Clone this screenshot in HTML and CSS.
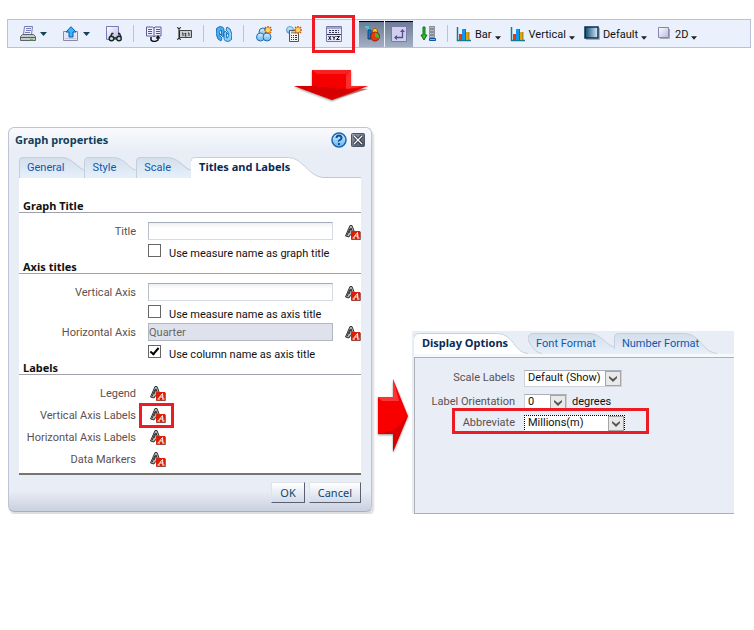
FILE: index.html
```html
<!DOCTYPE html>
<html lang="en">
<head>
<meta charset="utf-8">
<title>Graph properties</title>
<link rel="stylesheet" href="styles.css">
</head>
<body>
<svg class="defs" aria-hidden="true">
  <defs>
    <linearGradient id="tabfill" x1="0" y1="0" x2="0" y2="1"><stop offset="0" stop-color="#d3dfec"/><stop offset="1" stop-color="#e7f0fa"/></linearGradient>
    <linearGradient id="blue" x1="0" y1="0" x2="1" y2="0"><stop offset="0" stop-color="#0b4770"/><stop offset="1" stop-color="#d9efff"/></linearGradient>
    <linearGradient id="lilac" x1="0" y1="0" x2="1" y2="1"><stop offset="0" stop-color="#fff"/><stop offset="1" stop-color="#b9b9df"/></linearGradient>
    <linearGradient id="sky" x1="0" y1="0" x2="0" y2="1"><stop offset="0" stop-color="#d8f1ff"/><stop offset="1" stop-color="#66b4ee"/></linearGradient>
    <linearGradient id="box" x1="0" y1="0" x2="1" y2="1"><stop offset="0" stop-color="#98a0ae"/><stop offset="1" stop-color="#465060"/></linearGradient>
    <filter id="soft" x="-20%" y="-20%" width="140%" height="150%"><feDropShadow dx="0" dy="1" stdDeviation="1" flood-opacity=".45"/></filter>
    <symbol id="caret" viewBox="0 0 7 4"><path d="M0 0h7L3.500 4z"/></symbol>
    <symbol id="chev" viewBox="0 0 8 6"><path d="M0 0v2l4 4 4-4V0L4 3z"/></symbol>
    <symbol id="fontfmt" viewBox="0 0 16 16">
      <path d="M.500 12L5 1.500h2L11 12l-2 1-1-3-3 1-1 2z" fill="#b5b5b5" stroke="#333" stroke-width="1"/>
      <path d="M4 9l2-5 1.500 4M2 11.500l3-7" fill="none" stroke="#333"/>
      <rect x="6" y="7" width="9.500" height="9" rx="1" fill="#dc1e05"/>
      <path d="M7 15.500h8.500V8" fill="none" stroke="#7c5a55" opacity=".7"/>
      <path d="M8.500 13.500l4-5 .500 5M10 12h3M7.500 14h2.500M12 14h2.500" fill="none" stroke="#fff" stroke-width="1"/>
    </symbol>
    <symbol id="bars" viewBox="0 0 16 16">
      <path d="M1.500 1v13.500H15" fill="none" stroke="#16798c" stroke-width="1.500"/>
      <path d="M3 8h3v6H3z" fill="#e23d08"/><path d="M6 3h4v11H6z" fill="#0b98f8"/><path d="M10 6h3v8h-3z" fill="#e4a700"/><path d="M9.500 3v11M13 6v8" stroke="#31526a" opacity=".6"/>
    </symbol>
    <symbol id="star" viewBox="0 0 8 8"><path d="M4 0v8M0 4h8M1 1l6 6M7 1L1 7" stroke="#d05a00" stroke-width="1.500"/><circle cx="4" cy="4" r="2.300" fill="#ffd75c"/></symbol>
  </defs>
</svg>

<header class="toolbar" role="toolbar" aria-label="Graph view">
  <div class="group">
    <button class="tool menu" aria-label="Print">
      <svg class="icon" viewBox="0 0 16 16"><path d="M4.500.500h8l-1 8h-8z" fill="#eef0ff" stroke="#777ab8"/><path d="M6 2.500h5M6 4.500h5M5 6.500h5" stroke="#7779be"/><path d="M2.500 8.500h11l2 2v4H.500v-4z" fill="#c6cacd" stroke="#5c626a"/><path d="M1 11.500h14" stroke="#555b64"/><path d="M10 13.500h3" stroke="#41d629" stroke-width="1.500"/></svg>
      <svg class="caret"><use href="#caret"/></svg>
    </button>
    <button class="tool menu" aria-label="Export">
      <svg class="icon" viewBox="0 0 16 16"><path d="M4 5.500H.500v9h14v-9H11" fill="#e5e5f3" stroke="#8989a9"/><path d="M2 12.500h11" stroke="#c4c4d6"/><path d="M8 .700L13 6h-3v5H6V6H3z" fill="#3fb2ff" stroke="#075fab"/></svg>
      <svg class="caret"><use href="#caret"/></svg>
    </button>
    <button class="tool" aria-label="Preview">
      <svg class="icon" viewBox="0 0 16 16"><path d="M.500.500h12v13H.500z" fill="url(#lilac)" stroke="#777ab8"/><path d="M4.500 11L6 7.500h1.500M15 11l-1.500-3.500H12M8 12h3" fill="none" stroke="#222" stroke-width="1.500"/><circle cx="5.500" cy="12.500" r="2.300" fill="#a9e8e9" stroke="#222" stroke-width="1.400"/><circle cx="13" cy="12.500" r="2.300" fill="#a9e8e9" stroke="#222" stroke-width="1.400"/></svg>
    </button>
  </div>
  <div class="group">
    <button class="tool" aria-label="Duplicate view">
      <svg class="icon" viewBox="0 0 16 16"><path d="M.500 1h6l1.500 1 1-1h6v9H9l-1 1-1-1H.500z" fill="#f0efff" stroke="#5c5b9d"/><path d="M8 2v8M2 3.500h4M2 5.500h4M2 7.500h4M10 3.500h4M10 5.500h4M10 7.500h4" stroke="#5655a3"/><path d="M5 11v3q3 3 7 0v-3" fill="none" stroke="#111" stroke-width="1.500"/><path d="M9.500 12.500L12 9l2.500 3.500z" fill="#111"/></svg>
    </button>
    <button class="tool" aria-label="Rename view">
      <svg class="icon" viewBox="0 0 16 16"><path d="M3.500 4.500h12v7h-12z" fill="#c9ccd0" stroke="#444"/><path d="M6 7h1v3M8.500 7.500h1.500l-1 2.500h1.500M12 7h1v3" fill="none" stroke="#333"/><path d="M1 1.500l2 1 2-1M3 2v11M1 13.500l2-1 2 1" fill="none" stroke="#111"/></svg>
    </button>
  </div>
  <div class="group">
    <button class="tool" aria-label="Refresh">
      <svg class="icon" viewBox="0 0 16 16"><path d="M.500 2.500Q3-.500 6.500 1 8 2 8 4v4l1-1-2 4-3-3 1.500.500V5Q5.500 3.500 4.500 4 2.500 6 4 10l2 2-1 3-3-2Q-1 8 .500 2.500z" fill="#49aef0" stroke="#1269ad" stroke-width=".900"/><path d="M15.500 13.500Q13 16.500 9.500 15 8 14 8 12V8L7 9l2-4 3 3-1.500-.500V11q0 1.500 1 1 2-2 .500-6l-2-2 1-3 3 2q3 5 1.500 10.500z" fill="#8bd0f8" stroke="#1269ad" stroke-width=".900"/></svg>
    </button>
  </div>
  <div class="group">
    <button class="tool" aria-label="New group">
      <svg class="icon" viewBox="0 0 16 16"><g fill="url(#sky)" stroke="#246eb2"><circle cx="7" cy="6" r="4"/><circle cx="4.500" cy="11" r="4"/><circle cx="11" cy="11" r="4"/></g><svg x="8" y="0" width="8" height="8"><use href="#star"/></svg></svg>
    </button>
    <button class="tool" aria-label="New calculated item">
      <svg class="icon" viewBox="0 0 16 16"><circle cx="4" cy="4" r="3.500" fill="url(#sky)" stroke="#5d9acb"/><path d="M3.500 4.500h9v11h-9z" fill="#f5f5f5" stroke="#555"/><path d="M5 6.500h6" stroke="#999" stroke-width="2"/><path d="M5 9.500h1m1 0h1m1 0h2M5 11.500h1m1 0h1m1 0h2M5 13.500h1m1 0h1m1 0h2" stroke="#333"/><svg x="8" y="0" width="8" height="8"><use href="#star"/></svg></svg>
    </button>
    <button class="tool marked" aria-label="Edit graph properties">
      <svg class="icon" viewBox="0 0 16 16"><path d="M.500.500h15v15H.500z" fill="#e7e8fa" stroke="#7779aa"/><path d="M1 2h14" stroke="#a5a7d0" stroke-width="2"/><path d="M3 4.500h2m1 0h2m1 0h2m1 0h1M3 6.500h2m1 0h2m1 0h2m1 0h1M1 8.500h14" stroke="#33344d"/><path d="M2.500 10l2.500 4m0-4l-2.500 4M6.500 10L8 12l1.500-2M8 12v2M10.500 10.500h3l-3 3h3" fill="none" stroke="#15152a"/></svg>
    </button>
    <button class="tool pressed" aria-label="Show graph" aria-pressed="true">
      <svg class="icon" viewBox="0 0 16 16"><path d="M1 1h3v12h7" fill="none" stroke="#39cae5" stroke-width="2"/><path d="M4 4h3v9H4z" fill="#1676d2" stroke="#06407d"/><path d="M8 8q0-5 3-6 3 1 3 6z" fill="#ffc72c" stroke="#874b00" stroke-width=".800"/><circle cx="11" cy="10.500" r="4.500" fill="#e8380c" stroke="#731600" stroke-width=".800"/><path d="M11 10.500V6.500q5 1 4 6z" fill="#45b72d"/></svg>
    </button>
    <button class="tool pressed" aria-label="Swap axes" aria-pressed="true">
      <svg class="icon" viewBox="0 0 16 16"><path d="M.500.500h15v15H.500z" fill="#d0d0ec" stroke="#7a7aab"/><path d="M4 11.500h7.500V5" fill="none" stroke="#505092" stroke-width="1.300"/><path d="M9 6l2.500-3L14 6zM6 9v5l-3-2.500z" fill="#505092"/></svg>
    </button>
    <button class="tool sort" aria-label="Sort">
      <svg class="icon" viewBox="0 0 16 16"><path d="M3 1h2v8h2l-3 5-3-5h2z" fill="#30c128" stroke="#087215"/><g fill="#b9bcc2" stroke="#74777e" stroke-width=".800"><path d="M9.500.500h5v2h-5zM9.500 3.500h5v2h-5zM9.500 6.500h5v2h-5zM9.500 9.500h5v2h-5z"/></g><path d="M9.500 12.500h6v2h-6z" fill="#77bef5" stroke="#0c55a5"/></svg>
    </button>
  </div>
  <div class="group types">
    <button class="tool type"><svg class="icon"><use href="#bars"/></svg><span>Bar</span><svg class="caret low"><use href="#caret"/></svg></button>
    <button class="tool type"><svg class="icon"><use href="#bars"/></svg><span>Vertical</span><svg class="caret low"><use href="#caret"/></svg></button>
    <button class="tool type"><svg class="icon" viewBox="0 0 16 16"><path d="M1 1h13v11H1z" fill="url(#blue)" stroke="#092b4b" stroke-width="1.500"/><path d="M2 13.500h13.500V2" fill="none" stroke="#a4adba"/></svg><span>Default</span><svg class="caret low"><use href="#caret"/></svg></button>
    <button class="tool type"><svg class="icon" viewBox="0 0 16 16"><path d="M2.500 1.500h10v10h-10z" fill="url(#lilac)" stroke="#8585b3"/><path d="M4 12.500h9.500V3" fill="none" stroke="#aaa"/></svg><span>2D</span><svg class="caret low"><use href="#caret"/></svg></button>
  </div>
</header>

<svg class="arrow-down" viewBox="0 0 80 38" aria-hidden="true"><path d="M20 4h39v16h17L40 34 2 20h18z" fill="#f40000" filter="url(#soft)"/><path d="M54 9l5-5v16h17l-22 3z" fill="#ff5b5b" opacity=".5"/><path d="M20 4h39l-5 4H25z" fill="#ff5b5b" opacity=".35"/><path d="M2 20h18l34 3h22L40 34z" fill="#ba0000" opacity=".5"/></svg>

<main class="stage">
  <section class="dialog" aria-labelledby="dialog-title">
    <div class="titlebar">
      <h1 id="dialog-title">Graph properties</h1>
      <button class="corner" aria-label="Help"><svg class="icon" viewBox="0 0 16 16"><circle cx="8" cy="8" r="7" fill="url(#sky)" stroke="#1768b1" stroke-width="1.500"/><path d="M5.500 6q0-2.500 2.500-2.500T10.500 6Q10.500 7 9 8T8 9.500M8 11v2" fill="none" stroke="#0b519c" stroke-width="2"/></svg></button>
      <button class="corner" aria-label="Close"><svg class="icon" viewBox="0 0 16 16"><rect x="1.500" y="1.500" width="13" height="13" rx="1" fill="url(#box)" stroke="#4c5665"/><path d="M4 4l8 8M12 4l-8 8" stroke="#1f2733" stroke-width="3"/><path d="M4 4l8 8M12 4l-8 8" stroke="#fff" stroke-width="1.300"/></svg></button>
    </div>
    <div class="tabs" role="tablist">
      <button class="tab" role="tab"><svg class="shape" viewBox="0 0 65 21" preserveAspectRatio="none"><path d="M.500 21V4Q.500.500 5 .500H42C54 .500 58 12 65 13V21z" fill="url(#tabfill)"/><path d="M.500 21V4Q.500.500 5 .500H42C54 .500 58 12 65 13" fill="none" stroke="#c3cfdb"/></svg><span>General</span></button>
      <button class="tab" role="tab"><svg class="shape" viewBox="0 0 52 21" preserveAspectRatio="none"><path d="M.500 21V4Q.500.500 5 .500H29C41 .500 45 12 52 13V21z" fill="url(#tabfill)"/><path d="M.500 21V4Q.500.500 5 .500H29C41 .500 45 12 52 13" fill="none" stroke="#c3cfdb"/></svg><span>Style</span></button>
      <button class="tab" role="tab"><svg class="shape" viewBox="0 0 53 21" preserveAspectRatio="none"><path d="M.500 21V4Q.500.500 5 .500H30C42 .500 46 12 53 13V21z" fill="url(#tabfill)"/><path d="M.500 21V4Q.500.500 5 .500H30C42 .500 46 12 53 13" fill="none" stroke="#c3cfdb"/></svg><span>Scale</span></button>
      <button class="tab active" role="tab" aria-selected="true"><svg class="shape" viewBox="0 0 136 21" preserveAspectRatio="none"><path d="M0 21V4Q0 .500 5 .500H100C115 .500 121 20 136 20.500V21z" fill="#fff"/><path d="M0 4Q0 .500 5 .500H100C115 .500 121 20 136 20.500" fill="none" stroke="#c3cfdb"/></svg><span>Titles and Labels</span></button>
    </div>
    <form class="sheet">
      <h2>Graph Title</h2>
      <div class="fields">
        <label for="gtitle">Title</label><input type="text" id="gtitle"><button type="button" class="fmt" aria-label="Format title"><svg class="icon"><use href="#fontfmt"/></svg></button>
        <div class="check"><input type="checkbox" id="usegraph"><label for="usegraph">Use measure name as graph title</label></div>
      </div>
      <h2>Axis titles</h2>
      <div class="fields">
        <label for="vaxis">Vertical Axis</label><input type="text" id="vaxis"><button type="button" class="fmt" aria-label="Format vertical axis title"><svg class="icon"><use href="#fontfmt"/></svg></button>
        <div class="check spaced"><input type="checkbox" id="usev"><label for="usev">Use measure name as axis title</label></div>
        <label for="haxis">Horizontal Axis</label><input type="text" id="haxis" value="Quarter" disabled><button type="button" class="fmt" aria-label="Format horizontal axis title"><svg class="icon"><use href="#fontfmt"/></svg></button>
        <div class="check"><input type="checkbox" id="useh" checked><label for="useh">Use column name as axis title</label></div>
      </div>
      <h2>Labels</h2>
      <div class="labels">
        <label for="f1">Legend</label><button type="button" class="fmt" id="f1"><svg class="icon"><use href="#fontfmt"/></svg></button>
        <label for="f2">Vertical Axis Labels</label><button type="button" class="fmt ringed" id="f2"><svg class="icon"><use href="#fontfmt"/></svg></button>
        <label for="f3">Horizontal Axis Labels</label><button type="button" class="fmt" id="f3"><svg class="icon"><use href="#fontfmt"/></svg></button>
        <label for="f4">Data Markers</label><button type="button" class="fmt" id="f4"><svg class="icon"><use href="#fontfmt"/></svg></button>
      </div>
    </form>
    <div class="footer"><button class="push">OK</button><button class="push">Cancel</button></div>
  </section>

  <svg class="arrow-right" viewBox="0 0 38 80" aria-hidden="true"><path d="M6 20h15V2l15 37-15 36V57H6z" fill="#f80000" filter="url(#soft)"/><path d="M6 20h15V2l6 22H10z" fill="#ff5656" opacity=".6"/><path d="M6 57h15v18l15-36-14 14z" fill="#b80000" opacity=".5"/></svg>

  <section class="format" aria-label="Label format">
    <div class="tabs" role="tablist">
      <button class="tab active" role="tab" aria-selected="true"><svg class="shape" viewBox="0 0 126 21" preserveAspectRatio="none"><path d="M0 21V5Q0 .500 6 .500H92C110 .500 111 20.500 126 20.500V21z" fill="#fff"/><path d="M0 5Q0 .500 6 .500H92C110 .500 111 20.500 126 20.500" fill="none" stroke="#c3cfdb"/></svg><span>Display Options</span></button>
      <button class="tab" role="tab"><svg class="shape" viewBox="0 0 87 21" preserveAspectRatio="none"><path d="M0 5Q0 .500 5 .500H62C74 .500 78 11 87 14V20.500H14Q6 19 0 7z" fill="url(#tabfill)"/><path d="M0 7Q0 .500 5 .500H62C74 .500 78 11 87 14M0 7Q6 19 14 20.500" fill="none" stroke="#c3cfdb"/></svg><span>Font Format</span></button>
      <button class="tab" role="tab"><svg class="shape" viewBox="0 0 112 21" preserveAspectRatio="none"><path d="M.500 21V5Q.500.500 5 .500H76C94 .500 96 20 112 20.500V21z" fill="url(#tabfill)"/><path d="M.500 16V5Q.500.500 5 .500H76C94 .500 96 20 112 20.500" fill="none" stroke="#c3cfdb"/></svg><span>Number Format</span></button>
    </div>
    <form class="pane">
      <div class="line"><label for="scale">Scale Labels</label><span class="pick wide"><select id="scale"><option>Default (Show)</option></select><svg class="chev" viewBox="0 0 14 13"><use href="#chev" x="3" y="4" width="8" height="6"/></svg></span></div>
      <div class="line"><label for="orient">Label Orientation</label><span class="pick small"><select id="orient"><option>0</option></select><svg class="chev" viewBox="0 0 14 13"><use href="#chev" x="3" y="4" width="8" height="6"/></svg></span><span class="unit">degrees</span></div>
      <div class="line outlined"><label for="abbr">Abbreviate</label><span class="pick wide focus"><select id="abbr"><option>Millions(m)</option></select><svg class="chev" viewBox="0 0 14 13"><use href="#chev" x="3" y="4" width="8" height="6"/></svg></span></div>
    </form>
  </section>
</main>
</body>
</html>
```

FILE: styles.css
```css
*, *::before, *::after { box-sizing: border-box; }

body {
  margin: 0;
  padding: 19px 0 0;
  background: #fff;
  color: #111;
  font: 11px/14px Roboto, "Liberation Sans", sans-serif;
}

button, input, select { font: inherit; color: inherit; }
button { display: flex; align-items: center; padding: 0; border: 0; background: none; }
svg { display: block; flex: none; }
.defs { position: absolute; width: 0; height: 0; }
.icon { width: 16px; height: 16px; }

/* Toolbar */
.toolbar {
  display: flex;
  align-items: center;
  height: 29px;
  margin: 0 3px 0 7px;
  padding-left: 12px;
  border: 1px solid #bcc1d5;
  background: #eaf1fd;
}
.group { display: flex; align-items: center; gap: 14px; height: 27px; }
.group + .group::before {
  content: "";
  width: 1px;
  height: 17px;
  margin-left: 11px;
  margin-right: -2px;
  background: #bcc3d2;
}
.menu { gap: 4px; margin-right: 2px; }
.caret { width: 7px; height: 4px; fill: #17405a; }
.caret.low { margin-top: 8px; fill: #222; width: 6px; }
.marked {
  justify-content: center;
  width: 43px;
  height: 38px;
  margin: 0 -10px 0 -4px;
  border: 3px solid #ed1c24;
}
.pressed {
  justify-content: center;
  width: 25px;
  height: 26px;
  border-top: 1px solid #000;
  background: linear-gradient(#6c7b94, #a3afc3);
}
.pressed + .pressed { width: 28px; margin-left: -13px; }
.sort { margin-left: -7px; }
.types { gap: 9px; }
.types.group::before { margin-right: -1px; }
.type { gap: 3px; }
.type span { padding-top: 2px; }

.arrow-down { width: 80px; height: 38px; margin-left: 292px; margin-top: 18px; }

/* Stage */
.stage { display: flex; align-items: flex-start; padding: 0 20px 0 8px; margin-top: 23px; }

.dialog {
  flex: 364 1 364px;
  padding: 0 10px;
  border: 1px solid #bfc3d3;
  border-bottom-color: #a9afbd;
  border-radius: 6px;
  background: linear-gradient(#f8fafd, #e9edf6 24px, #e9edf6 calc(100% - 20px), #c9d0de);
  box-shadow: 2px 3px 2px #dcdde0;
}
.titlebar { display: flex; align-items: center; gap: 3px; height: 29px; margin: 0 -5px 0 -4px; padding-bottom: 5px; }
h1 { flex: 1; margin: 0; font: bold 11px/14px "Noto Sans", sans-serif; color: #103e5b; }

.tabs { display: flex; position: relative; }
.tab { position: relative; height: 21px; padding: 0; color: #0f58ad; }
.tab span { position: relative; }
.shape { position: absolute; inset: 0; width: 100%; height: 100%; }
.tab.active { color: #0a2a55; font-family: "Noto Sans", sans-serif; font-weight: bold; }
.dialog .tabs { background: linear-gradient(#b9c9da, #b9c9da) bottom / 100% 1px no-repeat; }
.dialog .tab { padding: 0 20px 0 8px; }
.dialog .tab.active { padding: 0 33px 1px 8px; }

.sheet { padding: 20px 0 3px; border-bottom: 2px solid #77746f; background: #fff; }
h2 {
  margin: 0;
  padding: 2px 0 0 4px;
  border-bottom: 1px solid #9fa2ad;
  font: bold 11px/12px "Noto Sans", sans-serif;
  color: #111;
}
.fields { display: grid; grid-template-columns: 117px 1fr 16px; column-gap: 12px; align-items: center; padding-top: 9px; }
.fields > label, .labels > label, .line > label { color: #5b5150; text-align: right; }
.fields > label, .labels > label { padding-top: 2px; }
.fields input[type="text"] {
  width: 100%;
  min-width: 0;
  height: 18px;
  padding: 0;
  border: 1px solid #d6dae1;
  border-top: 1px solid #a5adba;
  border-left-color: #b9c0ca;
  background: linear-gradient(#edf0f2, #fff 5px);
}
.fields input[type="text"]:disabled { border-color: #b3b7bf; background: #dfe2ec; color: #666; }
.fmt { height: 16px; }
.fields .fmt { margin-top: 2px; }
.check { grid-column: 2 / 4; display: flex; align-items: flex-end; gap: 8px; height: 19px; }
.check.spaced { margin-bottom: 3px; }
.check label { line-height: 10px; }
.check input {
  appearance: none;
  display: grid;
  place-items: center;
  width: 13px;
  height: 13px;
  margin: 0 0 2px;
  border: 1px solid #666;
  background: #fff;
}
.check input:checked::after {
  content: "";
  width: 5px;
  height: 9px;
  margin-bottom: 2px;
  border: solid #000;
  border-width: 0 2px 2px 0;
  transform: rotate(40deg);
}
.labels { display: grid; grid-template-columns: 117px 1fr; grid-auto-rows: 22px; column-gap: 14px; align-items: center; padding-top: 7px; }
.labels .fmt { justify-self: start; position: relative; }
.ringed::after { content: ""; position: absolute; inset: -4px -8px -5px -11px; border: 3px solid #ed1c24; }

.footer { display: flex; justify-content: flex-end; gap: 4px; padding: 7px 0 8px; }
.push {
  height: 21px;
  padding: 0 8px;
  border: 1px solid #e0e3e8;
  border-right: 1px solid #596171;
  border-bottom: 1px solid #596171;
  background: linear-gradient(#fff, #d3dbe9);
  color: #12466a;
  font-family: "Noto Sans", sans-serif;
}

.arrow-right { width: 38px; height: 80px; margin: 250px 2px 0 0; }

/* Label format panel */
.format { flex: 322 1 322px; margin-top: 204px; padding-top: 2px; background: #e9edf5; }
.format .tabs { margin-left: 2px; border-bottom: 3px solid #f6f9fc; }
.format .tab { padding: 0 18px 0 8px; }
.format .tab.active { padding: 0 20px 1px 8px; }
.pane {
  display: grid;
  align-content: start;
  min-height: 157px;
  margin-left: 2px;
  padding: 8px 0 0 38px;
  border: solid #aeb0b5;
  border-width: 1px 0 1px 1px;
  background: #e9edf6;
}
.line { display: flex; align-items: center; gap: 9px; height: 24px; margin-left: -25px; }
.line > label { width: 87px; }
.pick { position: relative; height: 17px; }
.wide { width: 98px; }
.small { width: 43px; }
.focus { width: 101px; }
.pick select {
  appearance: none;
  display: block;
  width: 100%;
  height: 100%;
  padding: 0 18px 0 3px;
  border: 1px solid #cfd2d8;
  border-top-color: #aab1bb;
  border-radius: 0;
  background: #fff;
}
.focus select { border: 1px dotted #000; }
.chev { position: absolute; top: 1px; right: 1px; width: 16px; height: 15px; border: 1px solid #a5a5a5; background: #e9e9e9; fill: #555; pointer-events: none; }
.unit { margin-left: -4px; }
.outlined { position: relative; height: 18px; }
.outlined::after { content: ""; position: absolute; top: -6px; left: 24px; width: 197px; height: 26px; border: 3px solid #ed1c24; pointer-events: none; }
```
